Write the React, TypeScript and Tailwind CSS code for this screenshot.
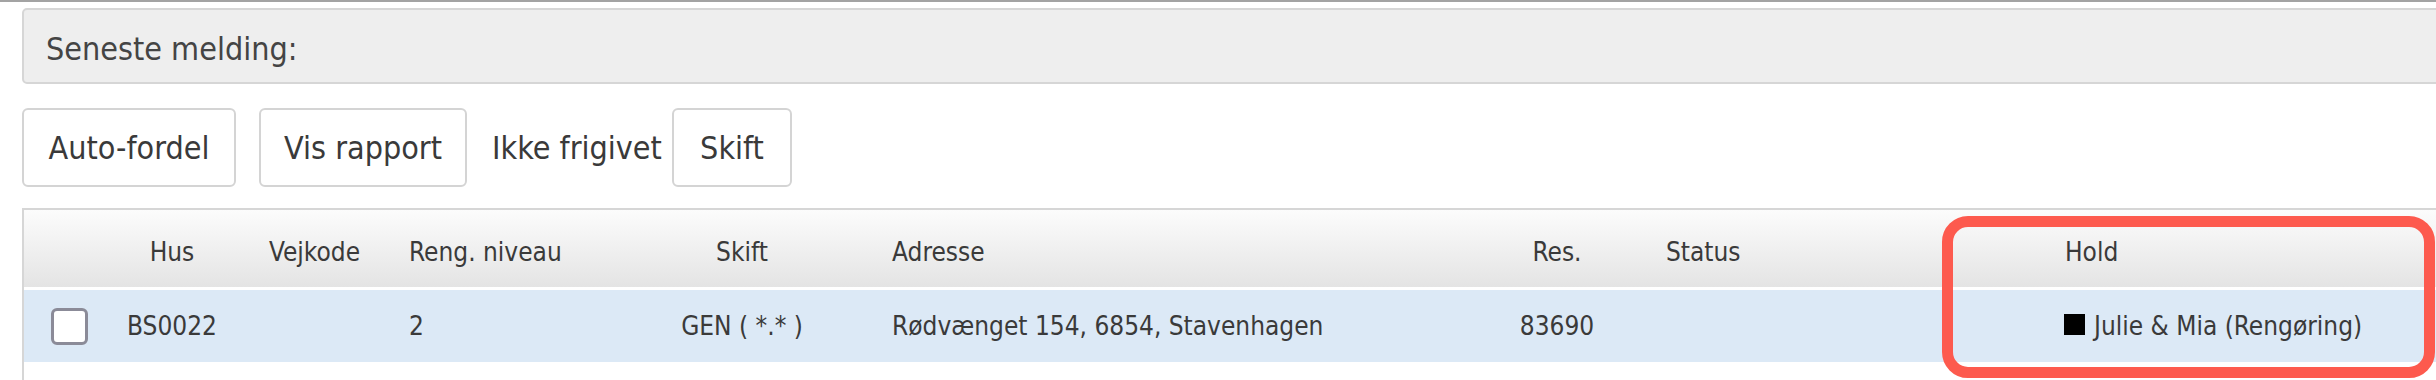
import React from 'react'

const font = "font-['DejaVu_Sans_Condensed','DejaVu_Sans',sans-serif] font-stretch-condensed"

function Button({ label, width }: { label: string; width: string }) {
  return (
    <button
      className={`${width} h-[79px] rounded-[6px] border-2 border-[#d4d4d4] bg-white text-[32px] text-[#3a3a3a] flex items-center justify-center`}
    >
      {label}
    </button>
  )
}

export default function App() {
  return (
    <div className={`relative w-[2436px] h-[380px] overflow-hidden bg-white text-[#3a3a3a] ${font}`}>
      <div className="h-[2px] bg-[#a3a3a3]" />

      {/* latest message */}
      <div className="pl-[22px] pt-[6px]">
        <div className="h-[76px] -mr-[12px] flex items-center pl-[22px] pt-[6px] rounded-[5px] border-2 border-[#d6d6d6] bg-[#eeeeee] text-[32px] text-[#444]">
          Seneste melding:
        </div>
      </div>

      {/* toolbar */}
      <div className="flex items-center pl-[22px] mt-[24px]">
        <Button label="Auto-fordel" width="w-[214px]" />
        <div className="w-[23px]" />
        <Button label="Vis rapport" width="w-[208px]" />
        <span className="w-[205px] pl-[25px] text-[32px] whitespace-nowrap">Ikke frigivet</span>
        <Button label="Skift" width="w-[120px]" />
      </div>

      {/* table */}
      <div className="ml-[22px] mt-[21px] border-t-2 border-l-2 border-[#d6d6d6] text-[26px] h-[200px]">
        <div className="flex items-center h-[80px] pt-[8px] bg-linear-to-b from-[#fcfcfc] to-[#e4e4e4] border-b-[3px] border-white whitespace-nowrap">
          <div className="w-[96px]" />
          <div className="w-[104px] text-center">Hus</div>
          <div className="w-[170px] pl-[45px]">Vejkode</div>
          <div className="w-[238px] pl-[15px]">Reng. niveau</div>
          <div className="w-[220px] text-center">Skift</div>
          <div className="w-[630px] pl-[40px]">Adresse</div>
          <div className="w-[150px] text-center">Res.</div>
          <div className="w-[370px] pl-[34px]">Status</div>
          <div className="pl-[63px]">Hold</div>
        </div>
        <div className="flex items-center h-[72px] bg-[#dce9f6] whitespace-nowrap">
          <div className="w-[96px] pl-[27px]">
            <div className="w-[37px] h-[37px] rounded-[6px] border-[3px] border-[#8b8b98] bg-white" />
          </div>
          <div className="w-[104px] text-center">BS0022</div>
          <div className="w-[170px]" />
          <div className="w-[238px] pl-[15px]">2</div>
          <div className="w-[220px] text-center">GEN ( *.* )</div>
          <div className="w-[630px] pl-[40px]">Rødvænget 154, 6854, Stavenhagen</div>
          <div className="w-[150px] text-center">83690</div>
          <div className="w-[370px]" />
          <div className="pl-[62px]">
            <span className="inline-block w-[21px] h-[21px] bg-black mr-[9px]" />
            Julie &amp; Mia (Rengøring)
          </div>
        </div>
      </div>

      {/* highlight annotation */}
      <div className="absolute left-[1942px] top-[216px] w-[493px] h-[162px] rounded-[26px] border-[11px] border-[#fd5a4e]" />
    </div>
  )
}
